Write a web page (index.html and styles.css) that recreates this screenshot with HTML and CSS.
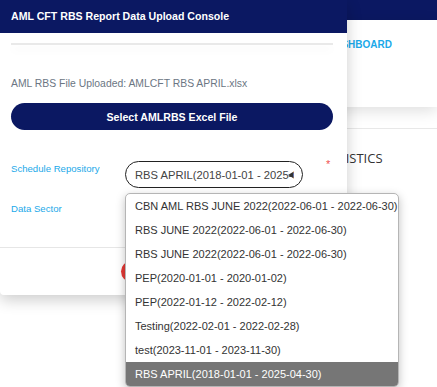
FILE: index.html
```html
<!DOCTYPE html>
<html lang="en">
<head>
    <meta charset="UTF-8">
    <meta name="viewport" content="width=device-width, initial-scale=1.0">
    <title>AML CFT RBS Report Data Upload Console</title>
    <link rel="stylesheet" href="styles.css">
</head>
<body>
    <div class="page">
        <div class="navbar"></div>
        <div class="card">
            <a class="card-link" href="#">DASHBOARD</a>
        </div>
        <div class="section">
            <h3 class="section-title">STATISTICS</h3>
            <div class="page-btn"></div>
        </div>
    </div>

    <div class="modal">
        <div class="modal-header">AML CFT RBS Report Data Upload Console</div>
        <div class="modal-body">
            <div class="progress"></div>
            <p class="uploaded">AML RBS File Uploaded: AMLCFT RBS APRIL.xlsx</p>
            <button class="select-btn">Select AMLRBS Excel File</button>
            <div class="form-row first">
                <label class="field-label">Schedule Repository</label>
                <div class="select-box">
                    <span class="select-text">RBS APRIL(2018-01-01 - 2025-04-30)</span>
                    <svg class="select-arrow" width="5" height="6" viewBox="0 0 5 6"><path d="M5 0 L0 3 L5 6 Z" fill="#333"/></svg>
                </div>
                <span class="required">*</span>
            </div>
            <div class="form-row">
                <label class="field-label">Data Sector</label>
                <div class="select-box dark"></div>
            </div>
        </div>
        <div class="modal-footer">
            <button class="close-btn"></button>
        </div>
    </div>

    <ul class="dropdown">
        <li>CBN AML RBS JUNE 2022(2022-06-01 - 2022-06-30)</li>
        <li>RBS JUNE 2022(2022-06-01 - 2022-06-30)</li>
        <li>RBS JUNE 2022(2022-06-01 - 2022-06-30)</li>
        <li>PEP(2020-01-01 - 2020-01-02)</li>
        <li>PEP(2022-01-12 - 2022-02-12)</li>
        <li>Testing(2022-02-01 - 2022-02-28)</li>
        <li>test(2023-11-01 - 2023-11-30)</li>
        <li class="selected">RBS APRIL(2018-01-01 - 2025-04-30)</li>
    </ul>
</body>
</html>
```

FILE: styles.css
```css
body {
    margin: 0;
    padding: 0;
    font-family: 'Liberation Sans', Arial, sans-serif;
    background-color: #fff;
    overflow: hidden;
    width: 437px;
    height: 387px;
    position: relative;
}
.page {
    width: 437px;
    height: 387px;
}
.navbar {
    height: 20px;
    background-color: #0b1862;
}
.card {
    height: 87px;
    background-color: #fff;
    box-shadow: 0 4px 14px rgba(0, 0, 0, 0.13);
    padding-left: 327px;
    box-sizing: border-box;
}
.card-link {
    display: inline-block;
    margin-top: 19px;
    font-size: 10px;
    font-weight: bold;
    color: #1ba9e9;
    text-decoration: none;
}
.section {
    margin-top: 21px;
    border-top: 1px solid #e8e8e8;
    padding-left: 316px;
}
.section-title {
    margin: 20px 0 0 0;
    height: 19px;
    font-family: 'Open Sans', sans-serif;
    font-weight: normal;
    font-size: 13px;
    color: #333;
}
.page-btn {
    margin: 217px 0 0 -141px;
    width: 160px;
    height: 8px;
    background-color: #4a86c5;
}
.modal {
    position: absolute;
    top: 0;
    left: 0;
    width: 347px;
    height: 295px;
    background-color: #fff;
    box-shadow: 0 5px 15px rgba(0, 0, 0, 0.2);
    border-radius: 0 0 4px 4px;
}
.modal-header {
    height: 33px;
    line-height: 33px;
    background-color: #0b1862;
    color: #fff;
    font-size: 10.6px;
    font-weight: bold;
    padding-left: 11px;
}
.modal-body {
    padding: 10px 14px 0 11px;
    height: 204px;
}
.progress {
    height: 2px;
    background-color: #e9e9e9;
    box-shadow: 0 5px 8px rgba(0, 0, 0, 0.05);
}
.uploaded {
    margin: 33px 0 0 0;
    font-size: 10.4px;
    color: #6b7683;
}
.select-btn {
    display: block;
    width: 100%;
    height: 27px;
    margin-top: 14px;
    border: none;
    border-radius: 14px;
    background-color: #0b1862;
    color: #fff;
    font-family: 'Liberation Sans', Arial, sans-serif;
    font-size: 10.6px;
    font-weight: bold;
}
.form-row {
    display: flex;
    align-items: flex-start;
    margin-top: 13px;
}
.form-row.first {
    margin-top: 31px;
}
.field-label {
    width: 114px;
    font-size: 9.6px;
    color: #1ba9e9;
    padding-top: 2px;
}
.select-box {
    width: 178px;
    height: 27px;
    box-sizing: border-box;
    border: 1px solid #222;
    border-radius: 14px;
    padding: 0 8px 0 9px;
    display: flex;
    align-items: center;
}
.select-box.dark {
    height: 22px;
}
.select-text {
    font-size: 11.2px;
    color: #444;
    white-space: nowrap;
    overflow: hidden;
    width: 159px;
}
.select-arrow {
    margin-left: -6px;
}
.required {
    margin: -3px 0 0 23px;
    color: #f05050;
    font-size: 11px;
}
.modal-footer {
    border-top: 1px solid #e6e6e6;
    height: 46px;
    padding: 13px 0 0 121px;
    box-sizing: border-box;
}
.close-btn {
    width: 60px;
    height: 21px;
    border: none;
    border-radius: 11px;
    background-color: #e53935;
}
.dropdown {
    position: absolute;
    top: 193px;
    left: 125px;
    width: 274px;
    margin: 0;
    padding: 0;
    list-style: none;
    background-color: #fff;
    border: 1px solid #b5b5b5;
    border-radius: 5px;
    box-shadow: 0 3px 10px rgba(0, 0, 0, 0.25);
    overflow: hidden;
    box-sizing: border-box;
}
.dropdown li {
    height: 24px;
    line-height: 24px;
    padding-left: 9px;
    font-size: 11px;
    color: #333;
    white-space: nowrap;
}
.dropdown li.selected {
    background-color: #767676;
    color: #fff;
}
```
